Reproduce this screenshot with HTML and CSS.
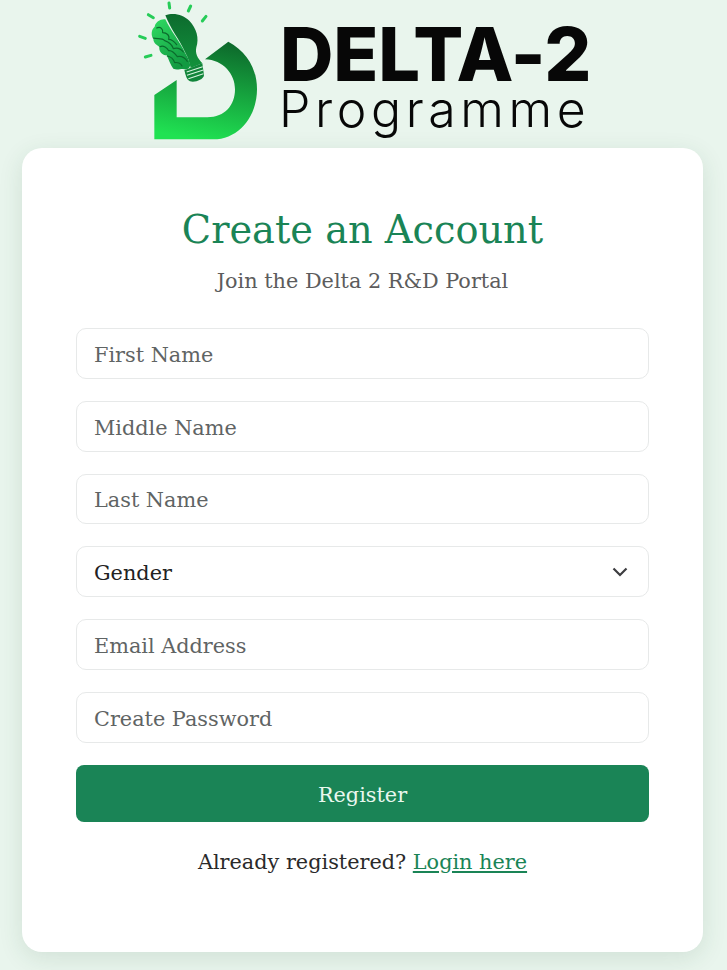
FILE: index.html
```html
<!DOCTYPE html>
<html lang="en">
<head>
<meta charset="utf-8">
<title>Create an Account</title>
<link rel="stylesheet" href="styles.css">
</head>
<body>
<header class="brand">
  <svg class="brand-mark" viewBox="0 0 480 450" aria-hidden="true">
    <defs>
      <linearGradient id="dgrad" x1="0.6" y1="0" x2="0.4" y2="1">
        <stop offset="0" stop-color="#0d6a2c"/>
        <stop offset="1" stop-color="#20e252"/>
      </linearGradient>
      <linearGradient id="bgrad" x1="0" y1="0" x2="0" y2="1">
        <stop offset="0" stop-color="#0d6b2e"/>
        <stop offset="1" stop-color="#12923c"/>
      </linearGradient>
      <linearGradient id="brain" x1="0" y1="0" x2="0.6" y2="1">
        <stop offset="0" stop-color="#2fdc62"/>
        <stop offset="1" stop-color="#129a42"/>
      </linearGradient>
    </defs>
    <path fill="url(#dgrad)" d="M103 285 L170 240 L170 352 L262 352 C315 352 345 315 345 268 C345 222 310 180 255 178 L325 125 C380 155 411 205 411 268 C411 350 355 418 280 418 L103 418 Z"/>
    <path fill="url(#bgrad)" d="M136 46 C160 36 190 44 208 62 C230 85 238 115 229 142 C225 160 232 174 247 190 L212 204 C208 185 204 172 196 158 C178 118 152 88 136 46 Z"/>
    <path fill="url(#brain)" d="M136 58 C122 56 106 66 104 80 C94 88 92 106 100 116 C100 130 112 136 118 140 C116 156 128 166 140 166 C146 178 152 196 160 206 C172 212 186 204 192 208 C204 210 212 202 210 192 C206 178 202 170 196 160 C178 122 152 92 136 58 Z"/>
    <g fill="none" stroke="#0b6a2c" stroke-width="3.5" stroke-linecap="round" stroke-linejoin="round">
      <path d="M110 84 C122 78 130 88 128 98 C140 98 150 106 146 118 C156 118 164 126 170 134"/>
      <path d="M100 114 C112 118 126 112 134 122 C146 126 156 134 160 146 C172 142 182 146 190 156"/>
      <path d="M120 140 C130 134 142 144 146 152 C156 150 166 162 172 170 C182 168 194 172 202 184"/>
      <path d="M142 168 C152 170 160 176 164 188 C172 186 182 190 186 198"/>
    </g>
    <path fill="#11853a" d="M193 211 L247 190 L252 226 C250 240 225 248 210 244 C200 240 197 226 193 211 Z"/>
    <g stroke="#d9f3e0" stroke-width="3.2" fill="none">
      <path d="M200 216 L248 200"/>
      <path d="M201 226 L250 210"/>
      <path d="M205 236 L250 221"/>
    </g>
    <g stroke="#26cc58" stroke-width="9" stroke-linecap="round" fill="none">
      <path d="M147 9 L149 24"/>
      <path d="M212 18 L205 33"/>
      <path d="M258 49 L247 63"/>
      <path d="M85 44 L100 53"/>
      <path d="M59 109 L76 115"/>
      <path d="M76 171 L93 166"/>
    </g>
  </svg>
  <div class="brand-text">
    <div class="brand-name">DELTA-2</div>
    <div class="brand-sub">Programme</div>
  </div>
</header>
<main class="card">
  <h1 class="card-title">Create an Account</h1>
  <p class="card-lead">Join the Delta 2 R&amp;D Portal</p>
  <form class="form">
    <input class="field" type="text" placeholder="First Name">
    <input class="field" type="text" placeholder="Middle Name">
    <input class="field" type="text" placeholder="Last Name">
    <div class="field select">
      <span>Gender</span>
      <svg class="chevron" viewBox="0 0 16 10" aria-hidden="true"><path d="M1.5 1.5 L8 8 L14.5 1.5"/></svg>
    </div>
    <input class="field" type="email" placeholder="Email Address">
    <input class="field" type="password" placeholder="Create Password">
    <button class="submit" type="button">Register</button>
  </form>
  <p class="switch">Already registered? <a href="#">Login here</a></p>
</main>
</body>
</html>
```
FILE: styles.css
```css
* { box-sizing: border-box; }
html, body { height: 100%; }
body {
  margin: 0;
  height: 970px;
  overflow: hidden;
  background: #e9f5ed;
  font-family: "DejaVu Serif", serif;
  padding: 0 24px 0 22px;
}
.brand {
  height: 148px;
  display: flex;
  align-items: flex-start;
  padding-left: 98px;
}
.brand-mark {
  width: 160px;
  height: 150px;
  flex: none;
}
.brand-text {
  padding-top: 24px;
  font-family: Inter, sans-serif;
  color: #070707;
}
.brand-name {
  font-size: 74px;
  font-weight: 800;
  line-height: 60px;
  letter-spacing: -0.2px;
  white-space: nowrap;
}
.brand-sub {
  font-size: 50px;
  font-weight: 300;
  line-height: 50px;
  letter-spacing: 4.6px;
  margin-left: -1px;
  white-space: nowrap;
}
.card {
  height: 804px;
  background: #fff;
  border-radius: 20px;
  box-shadow: 0 6px 24px rgba(30, 80, 50, 0.12);
  padding: 54px 54px 0;
}
.card-title {
  margin: 0;
  font-size: 38.3px;
  font-weight: 400;
  line-height: 56px;
  color: #1a8456;
  text-align: center;
}
.card-lead {
  margin: 0 0 24px;
  font-size: 20.8px;
  line-height: 46px;
  color: #5c5c5c;
  text-align: center;
}
.form {
  display: flex;
  flex-direction: column;
  gap: 22px;
}
.field {
  display: flex;
  align-items: center;
  justify-content: space-between;
  height: 50.8px;
  width: 100%;
  padding: 3px 17px 0;
  border: 1px solid #e7e9e9;
  border-radius: 10px;
  background: #fff;
  font-family: inherit;
  font-size: 20.8px;
  color: #222;
  outline: none;
}
.field::placeholder { color: #5f6464; opacity: 1; }
.chevron {
  width: 16px;
  height: 10px;
  margin: -3px 3px 0 0;
  fill: none;
  stroke: #3d3d40;
  stroke-width: 2.2;
}
.submit {
  height: 57px;
  padding: 3px 0 0;
  border: 0;
  border-radius: 8px;
  background: #1a8456;
  color: #e9f7ee;
  font-family: inherit;
  font-size: 20.8px;
}
.switch {
  margin: 24px 0 0;
  font-size: 20.8px;
  line-height: 32px;
  color: #2a2a2a;
  text-align: center;
}
.switch a { color: #1a8456; }
```
